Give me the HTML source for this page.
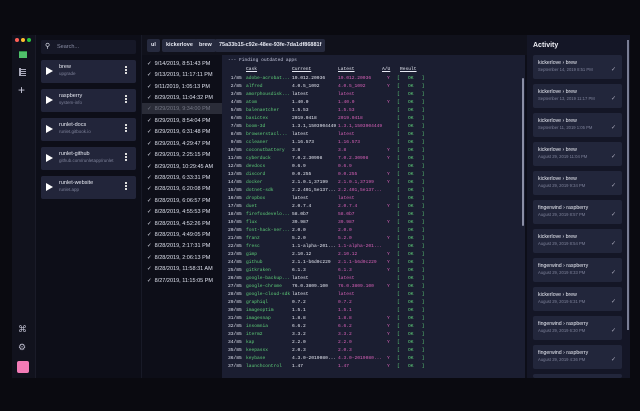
<!DOCTYPE html>
<html><head><meta charset="utf-8"><style>
*{margin:0;padding:0;box-sizing:border-box}
body{width:640px;height:411px;background:#0a0a10;font-family:"Liberation Sans",sans-serif;position:relative;overflow:hidden;color:#dfe2ee}
.a{position:absolute}
.win{left:12px;top:35px;width:618px;height:343px;background:#0d0e18}
.side{left:12px;top:35px;width:24px;height:343px;background:#11121d;border-right:1px solid #1a1b28}
.card{position:absolute;left:41px;width:95px;height:23px;background:#22253a;border-radius:2px}
.card .t{position:absolute;left:18px;top:4px;font-size:5.5px;color:#e8eaf3}
.card .s{position:absolute;left:18px;top:11px;font-size:4.5px;color:#7d8199}
.card .p{position:absolute;left:5px;top:7px;width:0;height:0;border-left:7px solid #fff;border-top:4.5px solid transparent;border-bottom:4.5px solid transparent}
.card .m{position:absolute;right:9px;top:6px;width:2px;height:2px;background:#ddd;box-shadow:0 3px 0 #ddd,0 6px 0 #ddd}
.hist{position:absolute;left:147px;font-size:5.5px;color:#dfe2ee;white-space:nowrap}
.tag{position:absolute;top:39px;height:13px;background:#262a3e;border-radius:2px;font-size:5.5px;font-weight:bold;line-height:13px;padding:0 4px;color:#e6e8f2}
.term{left:222px;top:55px;width:303px;height:323px;background:#1b1e31;font-family:"Liberation Mono",monospace;font-size:4.6px}
.r{position:absolute;left:0;height:8px;white-space:pre;line-height:8px}
.r span{position:absolute}
.n{left:6px;color:#dfe2ee}.c{left:24px;color:#5fd17a}.u{left:70px;color:#e6e8f2}.l{left:116px;color:#d861b8}.y{left:165px;color:#d861b8}.k{left:175px;color:#5fd17a}
.act{left:527px;top:35px;width:103px;height:343px;background:#141626}
.ac{position:absolute;left:533px;width:89px;height:24px;background:#22263b;border-radius:2px}
.ac .t{position:absolute;left:5px;top:5px;font-size:5.2px;color:#eceef6}
.ac .s{position:absolute;left:5px;top:12px;font-size:4.2px;color:#7d8199}
.ac .ck{position:absolute;right:6px;top:11px;font-size:6px;color:#aab}
</style></head><body>
<div class="a win"></div>
<div class="a side"></div>
<div class="a" style="left:15px;top:38px;width:4px;height:4px;border-radius:50%;background:#ff5f57"></div>
<div class="a" style="left:21px;top:38px;width:4px;height:4px;border-radius:50%;background:#febc2e"></div>
<div class="a" style="left:27px;top:38px;width:4px;height:4px;border-radius:50%;background:#28c840"></div>
<div class="a" style="left:19px;top:51px;width:8px;height:7px;background:#4fc16a;border-top:1px solid #2d8e46"></div>
<div class="a" style="left:19px;top:68px;width:2px;height:8px;background:#aab"></div>
<div class="a" style="left:21px;top:69px;width:5px;height:1px;background:#aab;box-shadow:0 2px 0 #aab,0 4px 0 #aab,0 6px 0 #aab"></div>
<div class="a" style="left:18px;top:85px;font-size:12px;color:#ccd;line-height:10px">+</div>
<div class="a" style="left:18px;top:324px;font-size:9px;color:#bbc">⌘</div>
<div class="a" style="left:18px;top:342px;font-size:9px;color:#bbc">⚙</div>
<div class="a" style="left:17px;top:361px;width:12px;height:12px;background:#f27bb6;border-radius:2px"></div>
<div class="a" style="left:36px;top:35px;width:106px;height:343px;background:#0d0e18;border-right:1px solid #181a27"></div>
<div class="a" style="left:41px;top:40px;width:95px;height:14px;background:#161827;border-radius:2px"></div>
<div class="a" style="left:45px;top:42px;font-size:7px;color:#dfe2ee">⚲</div>
<div class="a" style="left:57px;top:44px;font-size:5.5px;color:#8a8ea5">Search...</div>
<div class="card" style="top:60px"><div class="p"></div><div class="t">brew</div><div class="s">upgrade</div><div class="m"></div></div>
<div class="card" style="top:89px"><div class="p"></div><div class="t">raspberry</div><div class="s">system-info</div><div class="m"></div></div>
<div class="card" style="top:118px"><div class="p"></div><div class="t">runlet-docs</div><div class="s">runlet.gitbook.io</div><div class="m"></div></div>
<div class="card" style="top:147px"><div class="p"></div><div class="t">runlet-github</div><div class="s">github.com/runletapp/runlet</div><div class="m"></div></div>
<div class="card" style="top:176px"><div class="p"></div><div class="t">runlet-website</div><div class="s">runlet.app</div><div class="m"></div></div>
<div class="a" style="left:142px;top:35px;width:385px;height:20px;background:#10111b"></div>
<div class="tag" style="left:147px">ul</div>
<div class="tag" style="left:162px">kickerlove</div>
<div class="tag" style="left:195px">brew</div>
<div class="tag" style="left:215px">75a33b15-c92e-48ee-93fe-7da1df86881f</div>
<div class="a" style="left:142px;top:103px;width:80px;height:11px;background:#2a2c38"></div>
<div class="hist" style="top:61px">✓&nbsp; 9/14/2019, 8:51:43 PM</div>
<div class="hist" style="top:72px">✓&nbsp; 9/13/2019, 11:17:11 PM</div>
<div class="hist" style="top:84px">✓&nbsp; 9/11/2019, 1:05:13 PM</div>
<div class="hist" style="top:95px">✓&nbsp; 8/29/2019, 11:04:32 PM</div>
<div class="hist" style="top:106px;color:#777a88">✓&nbsp; 8/29/2019, 9:34:00 PM</div>
<div class="hist" style="top:118px">✓&nbsp; 8/29/2019, 8:54:04 PM</div>
<div class="hist" style="top:129px">✓&nbsp; 8/29/2019, 6:31:48 PM</div>
<div class="hist" style="top:141px">✓&nbsp; 8/29/2019, 4:29:47 PM</div>
<div class="hist" style="top:152px">✓&nbsp; 8/29/2019, 2:25:15 PM</div>
<div class="hist" style="top:164px">✓&nbsp; 8/29/2019, 10:29:45 AM</div>
<div class="hist" style="top:175px">✓&nbsp; 8/28/2019, 6:33:31 PM</div>
<div class="hist" style="top:186px">✓&nbsp; 8/28/2019, 6:20:08 PM</div>
<div class="hist" style="top:198px">✓&nbsp; 8/28/2019, 6:06:57 PM</div>
<div class="hist" style="top:209px">✓&nbsp; 8/28/2019, 4:55:53 PM</div>
<div class="hist" style="top:221px">✓&nbsp; 8/28/2019, 4:52:26 PM</div>
<div class="hist" style="top:232px">✓&nbsp; 8/28/2019, 4:49:05 PM</div>
<div class="hist" style="top:243px">✓&nbsp; 8/28/2019, 2:17:31 PM</div>
<div class="hist" style="top:255px">✓&nbsp; 8/28/2019, 2:06:13 PM</div>
<div class="hist" style="top:266px">✓&nbsp; 8/28/2019, 11:58:31 AM</div>
<div class="hist" style="top:278px">✓&nbsp; 8/27/2019, 11:15:05 PM</div>
<div class="a term">
<div class="r" style="top:2px;left:6px;color:#c8cbe0">--- Finding outdated apps</div>
<div class="r" style="top:11px"><span class="c" style="color:#e6e8f2;text-decoration:underline">Cask</span><span class="u" style="text-decoration:underline">Current</span><span class="l" style="color:#e6e8f2;text-decoration:underline">Latest</span><span class="y" style="left:160px;color:#e6e8f2;text-decoration:underline">A/U</span><span class="k" style="left:178px;color:#e6e8f2;text-decoration:underline">Result</span></div>
<div class="r" style="top:20px"><span class="n"> 1/85</span><span class="c">adobe-acrobat...</span><span class="u">19.012.20036</span><span class="l">19.012.20036</span><span class="y">Y</span><span class="k">[   OK   ]</span></div>
<div class="r" style="top:28px"><span class="n"> 2/85</span><span class="c">alfred</span><span class="u">4.0.5_1092</span><span class="l">4.0.5_1092</span><span class="y">Y</span><span class="k">[   OK   ]</span></div>
<div class="r" style="top:36px"><span class="n"> 3/85</span><span class="c">amorphousdisk...</span><span class="u">latest</span><span class="l">latest</span><span class="k">[   OK   ]</span></div>
<div class="r" style="top:44px"><span class="n"> 4/85</span><span class="c">atom</span><span class="u">1.40.0</span><span class="l">1.40.0</span><span class="y">Y</span><span class="k">[   OK   ]</span></div>
<div class="r" style="top:52px"><span class="n"> 5/85</span><span class="c">balenaetcher</span><span class="u">1.5.53</span><span class="l">1.5.53</span><span class="k">[   OK   ]</span></div>
<div class="r" style="top:60px"><span class="n"> 6/85</span><span class="c">basictex</span><span class="u">2019.0418</span><span class="l">2019.0418</span><span class="k">[   OK   ]</span></div>
<div class="r" style="top:68px"><span class="n"> 7/85</span><span class="c">boom-3d</span><span class="u">1.3.1,1503904449</span><span class="l">1.3.1,1503904449</span><span class="k">[   OK   ]</span></div>
<div class="r" style="top:76px"><span class="n"> 8/85</span><span class="c">browserstacl...</span><span class="u">latest</span><span class="l">latest</span><span class="k">[   OK   ]</span></div>
<div class="r" style="top:84px"><span class="n"> 9/85</span><span class="c">ccleaner</span><span class="u">1.16.573</span><span class="l">1.16.573</span><span class="k">[   OK   ]</span></div>
<div class="r" style="top:92px"><span class="n">10/85</span><span class="c">coconutbattery</span><span class="u">3.8</span><span class="l">3.8</span><span class="y">Y</span><span class="k">[   OK   ]</span></div>
<div class="r" style="top:100px"><span class="n">11/85</span><span class="c">cyberduck</span><span class="u">7.0.2.30998</span><span class="l">7.0.2.30998</span><span class="y">Y</span><span class="k">[   OK   ]</span></div>
<div class="r" style="top:108px"><span class="n">12/85</span><span class="c">devdocs</span><span class="u">0.6.9</span><span class="l">0.6.9</span><span class="k">[   OK   ]</span></div>
<div class="r" style="top:116px"><span class="n">13/85</span><span class="c">discord</span><span class="u">0.0.255</span><span class="l">0.0.255</span><span class="y">Y</span><span class="k">[   OK   ]</span></div>
<div class="r" style="top:124px"><span class="n">14/85</span><span class="c">docker</span><span class="u">2.1.0.1,37199</span><span class="l">2.1.0.1,37199</span><span class="y">Y</span><span class="k">[   OK   ]</span></div>
<div class="r" style="top:132px"><span class="n">15/85</span><span class="c">dotnet-sdk</span><span class="u">2.2.401,5e137...</span><span class="l">2.2.401,5e137...</span><span class="k">[   OK   ]</span></div>
<div class="r" style="top:140px"><span class="n">16/85</span><span class="c">dropbox</span><span class="u">latest</span><span class="l">latest</span><span class="k">[   OK   ]</span></div>
<div class="r" style="top:148px"><span class="n">17/85</span><span class="c">duet</span><span class="u">2.0.7.4</span><span class="l">2.0.7.4</span><span class="y">Y</span><span class="k">[   OK   ]</span></div>
<div class="r" style="top:156px"><span class="n">18/85</span><span class="c">firefoxdevelo...</span><span class="u">58.0b7</span><span class="l">58.0b7</span><span class="k">[   OK   ]</span></div>
<div class="r" style="top:164px"><span class="n">19/85</span><span class="c">flux</span><span class="u">39.987</span><span class="l">39.987</span><span class="y">Y</span><span class="k">[   OK   ]</span></div>
<div class="r" style="top:172px"><span class="n">20/85</span><span class="c">font-hack-ner...</span><span class="u">2.0.0</span><span class="l">2.0.0</span><span class="k">[   OK   ]</span></div>
<div class="r" style="top:180px"><span class="n">21/85</span><span class="c">franz</span><span class="u">5.2.0</span><span class="l">5.2.0</span><span class="y">Y</span><span class="k">[   OK   ]</span></div>
<div class="r" style="top:188px"><span class="n">22/85</span><span class="c">fresc</span><span class="u">1.1-alpha-201...</span><span class="l">1.1-alpha-201...</span><span class="k">[   OK   ]</span></div>
<div class="r" style="top:196px"><span class="n">23/85</span><span class="c">gimp</span><span class="u">2.10.12</span><span class="l">2.10.12</span><span class="y">Y</span><span class="k">[   OK   ]</span></div>
<div class="r" style="top:204px"><span class="n">24/85</span><span class="c">github</span><span class="u">2.1.1-b6d0c229</span><span class="l">2.1.1-b6d0c229</span><span class="y">Y</span><span class="k">[   OK   ]</span></div>
<div class="r" style="top:212px"><span class="n">25/85</span><span class="c">gitkraken</span><span class="u">6.1.3</span><span class="l">6.1.3</span><span class="y">Y</span><span class="k">[   OK   ]</span></div>
<div class="r" style="top:220px"><span class="n">26/85</span><span class="c">google-backup...</span><span class="u">latest</span><span class="l">latest</span><span class="k">[   OK   ]</span></div>
<div class="r" style="top:228px"><span class="n">27/85</span><span class="c">google-chrome</span><span class="u">76.0.3809.100</span><span class="l">76.0.3809.100</span><span class="y">Y</span><span class="k">[   OK   ]</span></div>
<div class="r" style="top:236px"><span class="n">28/85</span><span class="c">google-cloud-sdk</span><span class="u">latest</span><span class="l">latest</span><span class="k">[   OK   ]</span></div>
<div class="r" style="top:244px"><span class="n">29/85</span><span class="c">graphiql</span><span class="u">0.7.2</span><span class="l">0.7.2</span><span class="k">[   OK   ]</span></div>
<div class="r" style="top:252px"><span class="n">30/85</span><span class="c">imageoptim</span><span class="u">1.5.1</span><span class="l">1.5.1</span><span class="k">[   OK   ]</span></div>
<div class="r" style="top:260px"><span class="n">31/85</span><span class="c">imagesnap</span><span class="u">1.8.8</span><span class="l">1.8.8</span><span class="y">Y</span><span class="k">[   OK   ]</span></div>
<div class="r" style="top:268px"><span class="n">32/85</span><span class="c">insomnia</span><span class="u">6.6.2</span><span class="l">6.6.2</span><span class="y">Y</span><span class="k">[   OK   ]</span></div>
<div class="r" style="top:276px"><span class="n">33/85</span><span class="c">iterm2</span><span class="u">3.3.2</span><span class="l">3.3.2</span><span class="y">Y</span><span class="k">[   OK   ]</span></div>
<div class="r" style="top:284px"><span class="n">34/85</span><span class="c">kap</span><span class="u">2.2.0</span><span class="l">2.2.0</span><span class="y">Y</span><span class="k">[   OK   ]</span></div>
<div class="r" style="top:292px"><span class="n">35/85</span><span class="c">keepassx</span><span class="u">2.0.3</span><span class="l">2.0.3</span><span class="k">[   OK   ]</span></div>
<div class="r" style="top:300px"><span class="n">36/85</span><span class="c">keybase</span><span class="u">4.3.0-2019080...</span><span class="l">4.3.0-2019080...</span><span class="y">Y</span><span class="k">[   OK   ]</span></div>
<div class="r" style="top:308px"><span class="n">37/85</span><span class="c">launchcontrol</span><span class="u">1.47</span><span class="l">1.47</span><span class="y">Y</span><span class="k">[   OK   ]</span></div>
<div class="a" style="left:300px;top:23px;width:2px;height:148px;background:#8a8ea5;border-radius:1px"></div>
</div>
<div class="a act"></div>
<div class="a" style="left:533px;top:42px;font-size:7px;font-weight:bold;color:#f0f1f7">Activity</div>
<div class="a" style="left:627px;top:40px;width:2px;height:290px;background:#7a7e95"></div>
<div class="ac" style="top:55px"><div class="t">kickerlove › brew</div><div class="s">September 14, 2019 8:51 PM</div><div class="ck">✓</div></div>
<div class="ac" style="top:84px"><div class="t">kickerlove › brew</div><div class="s">September 13, 2019 11:17 PM</div><div class="ck">✓</div></div>
<div class="ac" style="top:113px"><div class="t">kickerlove › brew</div><div class="s">September 11, 2019 1:05 PM</div><div class="ck">✓</div></div>
<div class="ac" style="top:142px"><div class="t">kickerlove › brew</div><div class="s">August 29, 2019 11:04 PM</div><div class="ck">✓</div></div>
<div class="ac" style="top:171px"><div class="t">kickerlove › brew</div><div class="s">August 29, 2019 9:34 PM</div><div class="ck">✓</div></div>
<div class="ac" style="top:200px"><div class="t">fingerwind › raspberry</div><div class="s">August 29, 2019 8:57 PM</div><div class="ck">✓</div></div>
<div class="ac" style="top:229px"><div class="t">kickerlove › brew</div><div class="s">August 29, 2019 8:54 PM</div><div class="ck">✓</div></div>
<div class="ac" style="top:258px"><div class="t">fingerwind › raspberry</div><div class="s">August 29, 2019 8:33 PM</div><div class="ck">✓</div></div>
<div class="ac" style="top:287px"><div class="t">kickerlove › brew</div><div class="s">August 29, 2019 6:31 PM</div><div class="ck">✓</div></div>
<div class="ac" style="top:316px"><div class="t">fingerwind › raspberry</div><div class="s">August 29, 2019 6:30 PM</div><div class="ck">✓</div></div>
<div class="ac" style="top:345px"><div class="t">fingerwind › raspberry</div><div class="s">August 29, 2019 4:36 PM</div><div class="ck">✓</div></div>
<div class="ac" style="top:374px;height:4px"></div>
</body></html>
